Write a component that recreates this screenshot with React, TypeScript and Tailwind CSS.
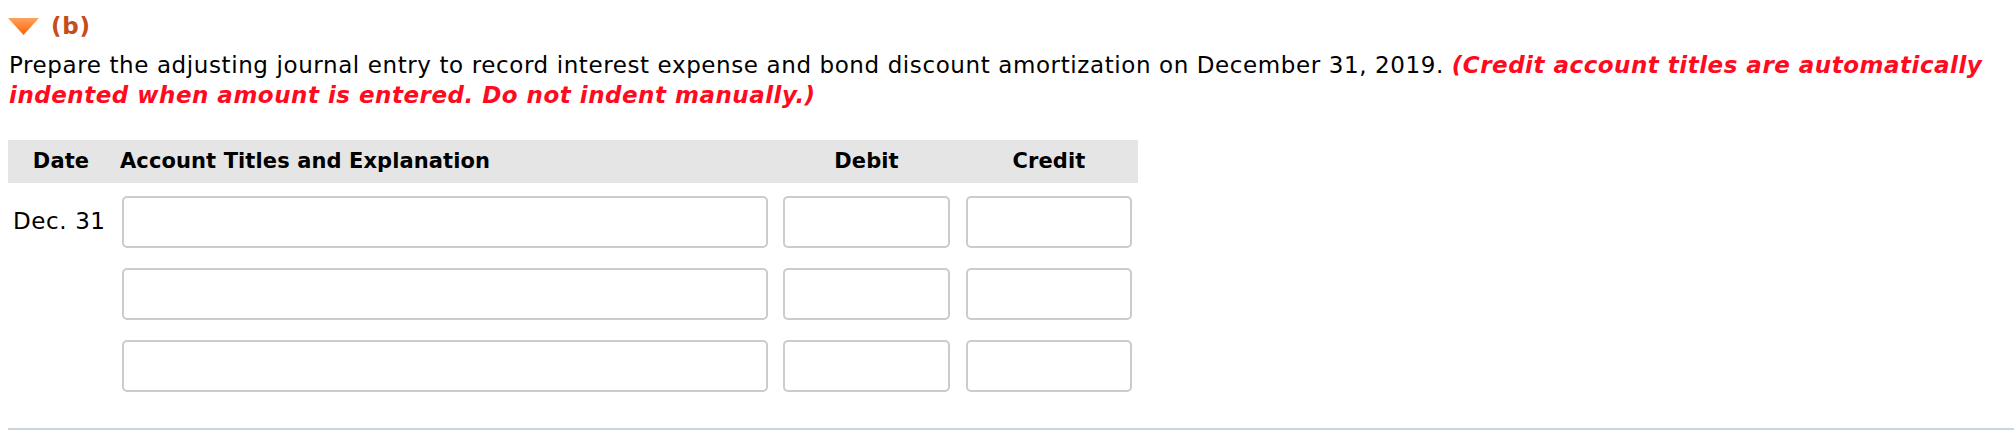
import React from 'react';

const rows = [{ date: 'Dec. 31' }, { date: '' }, { date: '' }];

const Field: React.FC<{ className: string }> = ({ className }) => (
  <input
    type="text"
    className={`h-[52px] rounded-[5px] border-2 border-[#cccccc] bg-white outline-none ${className}`}
  />
);

export default function App() {
  return (
    <div className="min-h-[432px] w-[2014px] bg-white font-['DejaVu_Sans',Verdana,sans-serif] text-black">
      <div className="ml-[8px] border-b-2 border-[#c9d4df] pb-[36px]">
        <div className="flex h-[40px] items-center pt-[12px]">
          <svg width="31" height="17" viewBox="0 0 31 17" className="mt-[1px]">
            <defs>
              <linearGradient id="tri" x1="0" y1="0" x2="0" y2="1">
                <stop offset="0" stopColor="#ffa160" />
                <stop offset="1" stopColor="#ff6400" />
              </linearGradient>
            </defs>
            <polygon points="0,0 31,0 15.5,17" fill="url(#tri)" />
          </svg>
          <span className="ml-[12px] text-[23px] font-bold tracking-[0.8px] text-[#c64b1e]">(b)</span>
        </div>

        <p className="mt-[10px] pl-[1px] text-[23px] leading-[30px] tracking-[0.6px]">
          Prepare the adjusting journal entry to record interest expense and bond discount amortization on December
          31, 2019.{' '}
          <span className="font-bold italic tracking-[0.5px] text-[#ff0a1e]">
            (Credit account titles are automatically
            <br />
            indented when amount is entered. Do not indent manually.)
          </span>
        </p>

        <div className="mt-[30px] w-[1130px]">
          <div className="flex h-[43px] items-center bg-[#e5e5e5] text-[21px] font-bold tracking-[0.1px]">
            <div className="w-[106px] text-center">Date</div>
            <div className="ml-[6px] w-[648px]">Account Titles and Explanation</div>
            <div className="ml-[15px] w-[167px] text-center">Debit</div>
            <div className="ml-[16px] w-[166px] text-center">Credit</div>
          </div>

          <div className="mt-[13px] flex flex-col gap-[20px]">
            {rows.map((row, i) => (
              <div key={i} className="flex items-center">
                <div className="w-[106px] pl-[5px] pb-[1px] text-[23px] tracking-[0.6px]">{row.date}</div>
                <Field className="ml-[8px] w-[646px]" />
                <Field className="ml-[15px] w-[167px]" />
                <Field className="ml-[16px] w-[166px]" />
              </div>
            ))}
          </div>
        </div>
      </div>
    </div>
  );
}
